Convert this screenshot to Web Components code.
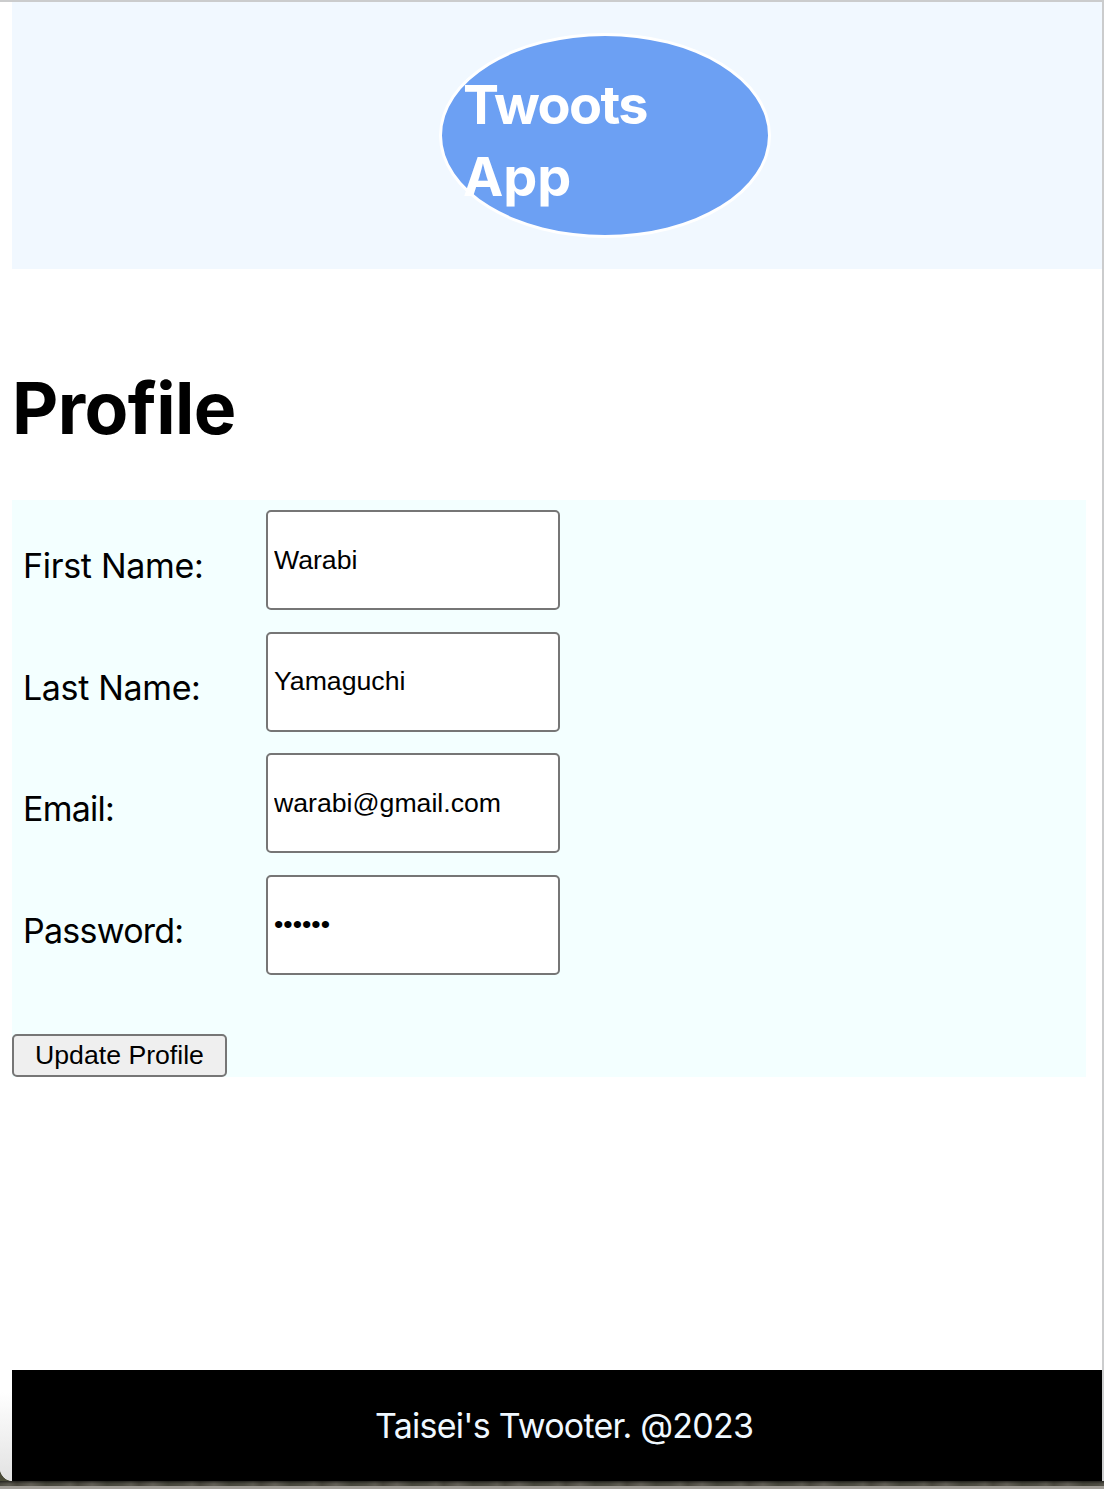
<!DOCTYPE html>
<html lang="en">
<head>
<meta charset="utf-8">
<title>Twoots App</title>
<style>
html, body { margin: 0; height: 100%; overflow: hidden; }
body { background: #fff; font-family: Inter, "Liberation Sans", sans-serif; color: #000; }
</style>
</head>
<body>
<twoots-window>
  <twoots-header slot="header"><span>Twoots</span><span style="letter-spacing:-.1px">App</span></twoots-header>
  <profile-form>
    <profile-field value="Warabi" style="--ls:-.3px">First Name:</profile-field>
    <profile-field value="Yamaguchi" style="--ls:-.35px">Last Name:</profile-field>
    <profile-field value="warabi@gmail.com" type="email" style="--ls:-.75px">Email:</profile-field>
    <profile-field value="warabi" type="password" style="--ls:-.75px">Password:</profile-field>
  </profile-form>
  <twoots-footer slot="footer">Taisei's Twooter. @2023</twoots-footer>
</twoots-window>
<script>
function define(name, html, setup) {
  customElements.define(name, class extends HTMLElement {
    constructor() {
      super();
      this.attachShadow({ mode: 'open' }).innerHTML = html;
    }
    connectedCallback() { if (setup) setup(this, this.shadowRoot); }
  });
}

define('twoots-window', `
<style>
:host { display: flex; flex-direction: column; height: 1489px; box-sizing: border-box; border-top: 2px solid #cbcccd; }
.view { display: flex; flex-direction: column; height: 1479px; box-sizing: border-box; padding-left: 12px; border-right: 2px solid #cbcccd;
  background: linear-gradient(#fff 94%, #e2e2e2) left / 12px 100% no-repeat; border-bottom-left-radius: 13px; }
.wrap { background: #4a4b38; height: 1479px; flex: none; }
.view { background-color: #fff; }
h1 { margin: 94px 0 0 0; height: 137px; font-size: 71.5px; line-height: 91px; font-weight: 650; letter-spacing: -.6px; }
main { flex: 1; }
.desk { height: 5px; flex: none; background:
  linear-gradient(#0008, #0000 60%),
  repeating-linear-gradient(90deg, #4d4c42 0, #5c5a50 9px, #48463c 17px, #625f56 31px, #45453a 46px, #4d4c42 61px); }
.edge { height: 3px; flex: none; background: #a19e98; }
</style>
<div class="wrap"><div class="view">
  <slot name="header"></slot>
  <main><h1>Profile</h1><slot></slot></main>
  <slot name="footer"></slot>
</div></div>
<div class="desk"></div><div class="edge"></div>`);

define('twoots-header', `
<style>
:host { display: flex; height: 267px; flex: none; box-sizing: border-box; background: #f1f8ff; padding: 31px 0 0 427px; }
.logo { display: flex; flex-direction: column; box-sizing: border-box; width: 332px; height: 205px; padding: 33px 0 0 21px;
  border: 3px solid #fff; border-radius: 50%; background: #6ca0f3; color: #fff; font-size: 54px; line-height: 72px; font-weight: 650; letter-spacing: -1.65px; }
</style>
<div class="logo"><slot></slot></div>`);

define('profile-form', `
<style>
:host { display: flex; flex-direction: column; box-sizing: border-box; width: 1074px; height: 577px; padding-top: 10px; background: #f3ffff; }
.fields { display: flex; flex-direction: column; gap: 21.67px; }
button { box-sizing: border-box; width: 215px; height: 43px; margin: auto 0 0; padding: 0; border: 2px solid #767676; border-radius: 5px;
  background: #efefef; color: #000; font: 26.67px "Liberation Sans", sans-serif; }
</style>
<div class="fields"><slot></slot></div>
<button>Update Profile</button>`);

define('profile-field', `
<style>
:host { display: block; height: 100px; }
label { display: flex; height: 100px; }
.name { width: 243px; padding: 34px 0 0 11px; box-sizing: border-box; margin-right: 11px; font-size: 34px; line-height: 44px; letter-spacing: var(--ls); }
input { box-sizing: border-box; width: 294px; height: 100px; margin: 0; padding: 0 6px; border: 2px solid #767676; border-radius: 5px;
  background: #fff; color: #000; font: 26.67px "Liberation Sans", sans-serif; outline: none; }
</style>
<label><span class="name"><slot></slot></span><input></label>`, (host, root) => {
  const input = root.querySelector('input');
  input.type = host.getAttribute('type') || 'text';
  input.value = host.getAttribute('value');
});

define('twoots-footer', `
<style>
:host { display: block; height: 111px; flex: none; box-sizing: border-box; padding: 34px 0 0 363px; background: #000; color: #f0f8ff;
  font-size: 34px; line-height: 44px; letter-spacing: -.76px; white-space: nowrap; }
</style>
<slot></slot>`);
</script>
</body>
</html>
